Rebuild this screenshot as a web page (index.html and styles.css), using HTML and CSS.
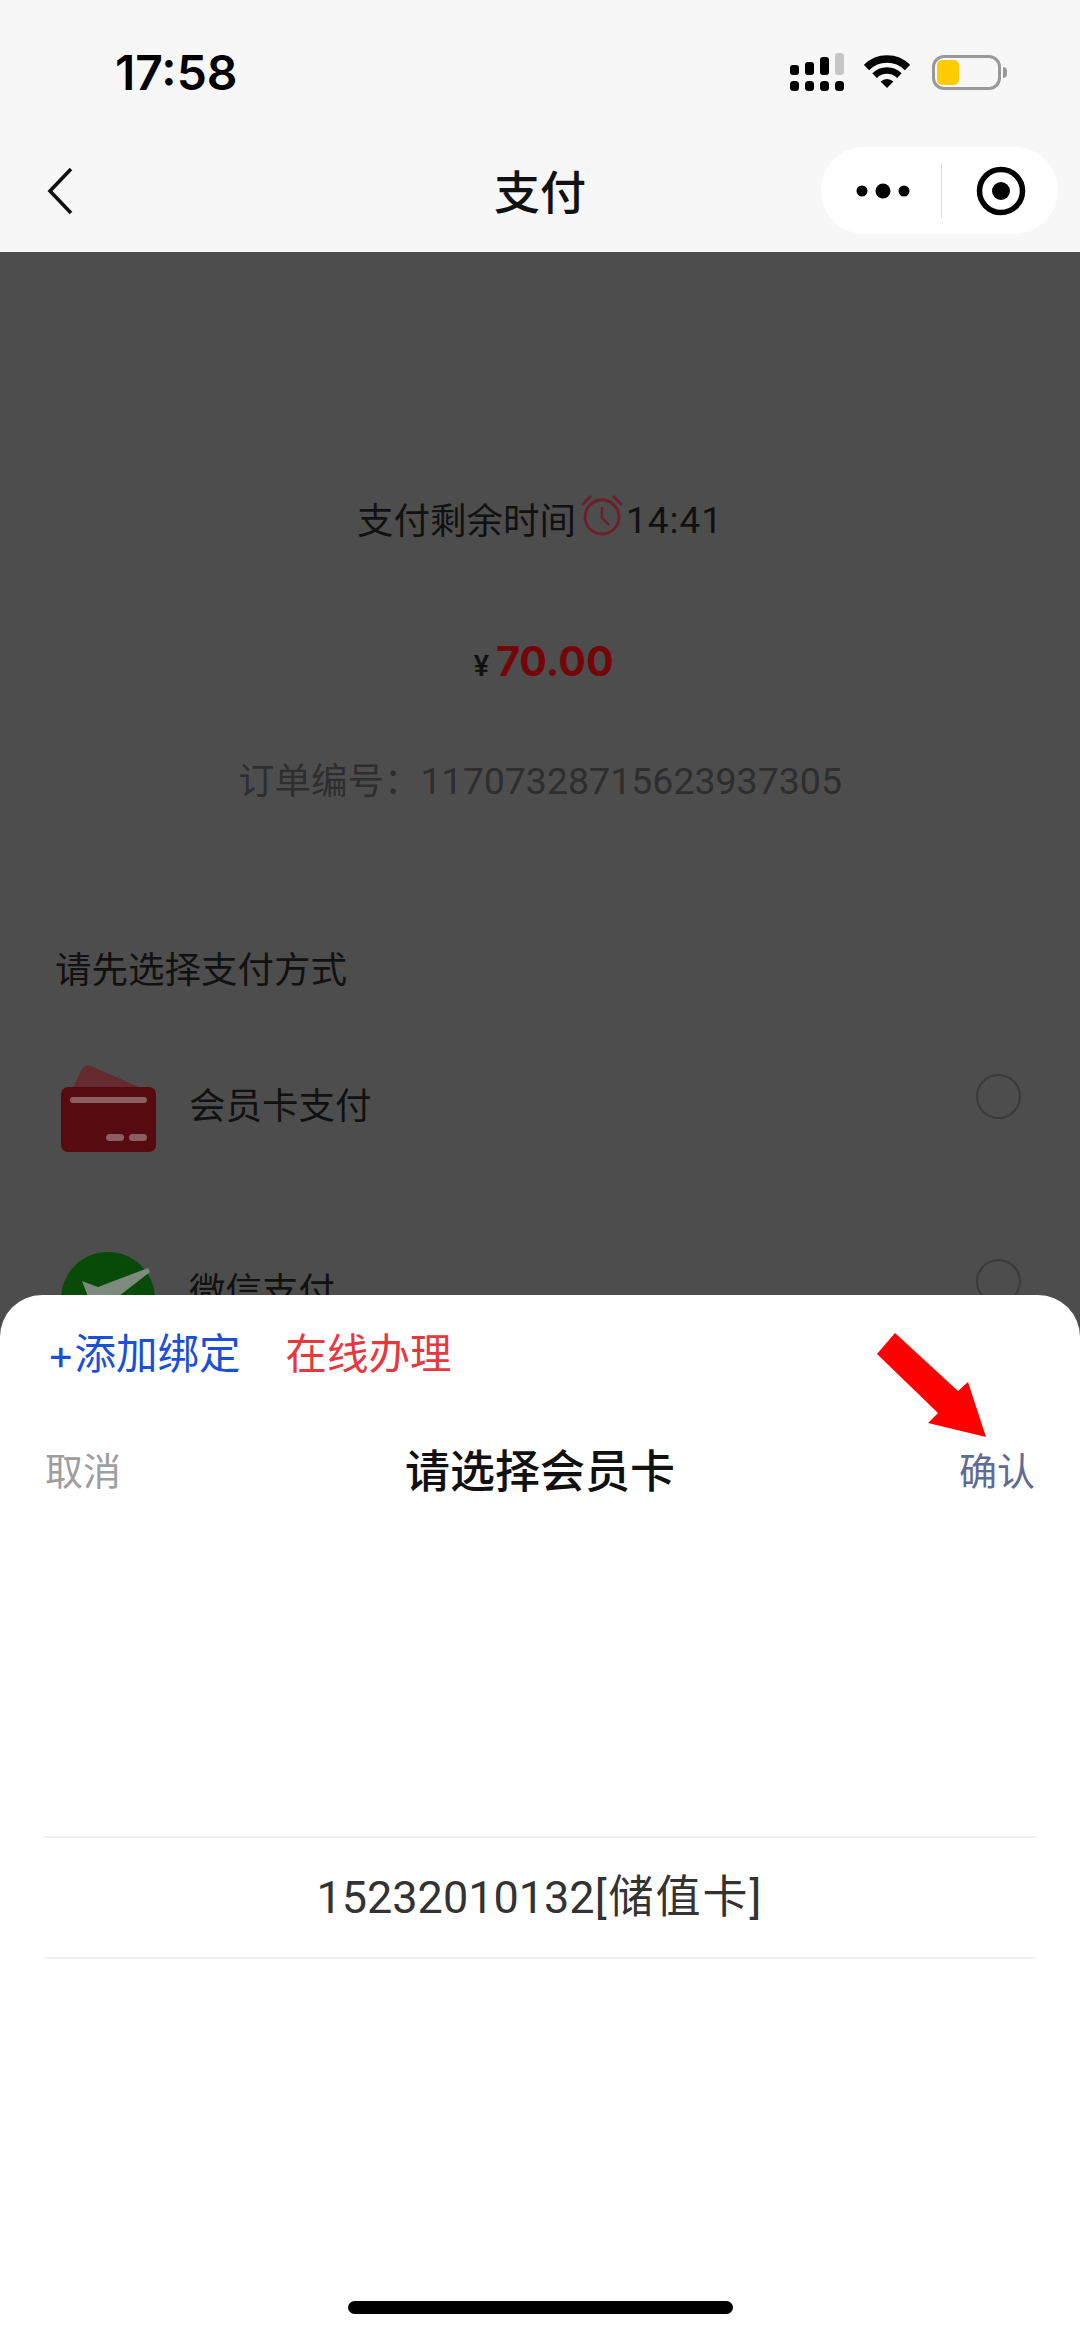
FILE: index.html
```html
<!DOCTYPE html>
<html lang="zh-CN">
<head>
    <meta charset="UTF-8">
    <meta name="viewport" content="width=device-width, initial-scale=1.0">
    <title>支付</title>
    <link rel="stylesheet" href="styles.css">
</head>
<body>
    <div class="phone">
        <!-- Status bar -->
        <div class="status-bar">
            <span class="time">17:58</span>
            <div class="status-icons">
                <svg class="signal" width="54" height="38" viewBox="0 0 54 38">
                    <rect x="0" y="12" width="9" height="10" rx="3" fill="#000"/>
                    <rect x="15" y="9" width="9" height="13" rx="3" fill="#000"/>
                    <rect x="30" y="4" width="9" height="18" rx="3" fill="#000"/>
                    <rect x="45" y="0" width="9" height="22" rx="3" fill="#c6c6c6"/>
                    <rect x="0" y="28" width="9" height="10" rx="3.5" fill="#000"/>
                    <rect x="15" y="28" width="9" height="10" rx="3.5" fill="#000"/>
                    <rect x="30" y="28" width="9" height="10" rx="3.5" fill="#000"/>
                    <rect x="45" y="28" width="9" height="10" rx="3.5" fill="#000"/>
                </svg>
                <svg class="wifi" width="46" height="34" viewBox="0 0 46 34">
                    <path d="M23 33 L16.6 26.6 A9 9 0 0 1 29.4 26.6 Z" fill="#000"/>
                    <path d="M10.6 20.6 A17.5 17.5 0 0 1 35.4 20.6" fill="none" stroke="#000" stroke-width="6.5"/>
                    <path d="M2.5 12.5 A29 29 0 0 1 43.5 12.5" fill="none" stroke="#000" stroke-width="7.5"/>
                </svg>
                <div class="battery">
                    <div class="battery-fill"></div>
                </div>
                <div class="battery-nub"></div>
            </div>
        </div>

        <!-- Nav bar -->
        <div class="nav-bar">
            <svg class="back" width="26" height="48" viewBox="0 0 26 48">
                <path d="M24 2 L3 24 L24 46" fill="none" stroke="#111" stroke-width="3.6"/>
            </svg>
            <h1 class="nav-title">支付</h1>
            <div class="capsule">
                <svg class="capsule-dots" width="54" height="16" viewBox="0 0 54 16">
                    <circle cx="6" cy="8" r="5.5" fill="#000"/>
                    <circle cx="27" cy="8" r="7.5" fill="#000"/>
                    <circle cx="48" cy="8" r="5.5" fill="#000"/>
                </svg>
                <div class="capsule-line"></div>
                <svg class="capsule-target" width="50" height="50" viewBox="0 0 50 50">
                    <circle cx="25" cy="25" r="21.5" fill="none" stroke="#000" stroke-width="5.5"/>
                    <circle cx="25" cy="25" r="9" fill="#000"/>
                </svg>
            </div>
        </div>

        <!-- Dimmed payment page -->
        <main class="pay-page">
            <div class="timer">
                <span>支付剩余时间</span>
                <svg class="alarm" width="44" height="42" viewBox="0 0 44 42">
                    <circle cx="22" cy="23" r="17" fill="none" stroke="#6e1e2a" stroke-width="2.8"/>
                    <path d="M22 13 V24 L29 31" fill="none" stroke="#6e1e2a" stroke-width="2.4"/>
                    <path d="M2 11 L11 2 M42 11 L33 2" fill="none" stroke="#6e1e2a" stroke-width="2.8"/>
                </svg>
                <span class="timer-count">14:41</span>
            </div>
            <div class="amount">
                <span class="yen">¥</span>
                <span class="price">70.00</span>
            </div>
            <p class="order-no">订单编号：<span class="order-digits">11707328715623937305</span></p>
            <p class="pay-heading">请先选择支付方式</p>

            <div class="pay-row">
                <svg class="pay-icon" width="96" height="87" viewBox="0 0 96 87">
                    <path d="M12 23 L21 4 Q24 -1 30 1 L80 23 Z" fill="#642a2e"/>
                    <rect x="0" y="22" width="95" height="65" rx="7" fill="#550b10"/>
                    <rect x="9" y="32" width="77" height="6" rx="3" fill="#8b5f60"/>
                    <rect x="45" y="69" width="18" height="7" rx="3.5" fill="#8b5f60"/>
                    <rect x="68" y="69" width="18" height="7" rx="3.5" fill="#8b5f60"/>
                </svg>
                <span class="pay-name">会员卡支付</span>
                <span class="radio"></span>
            </div>
            <div class="pay-row">
                <svg class="pay-icon" width="96" height="96" viewBox="0 0 96 96">
                    <circle cx="47" cy="49" r="47" fill="#084a08"/>
                    <path d="M21 31 L37 37 L87 18 L89 22 L40 60 Q34 62 31 57 Z" fill="#7f8a7f"/>
                </svg>
                <span class="pay-name">微信支付</span>
                <span class="radio"></span>
            </div>
        </main>

        <!-- Card picker sheet -->
        <section class="sheet">
            <div class="sheet-links">
                <span class="link-add">+添加绑定</span>
                <span class="link-apply">在线办理</span>
            </div>
            <div class="sheet-head">
                <span class="btn-cancel">取消</span>
                <span class="sheet-title">请选择会员卡</span>
                <span class="btn-confirm">确认</span>
            </div>
            <div class="picker">
                <div class="picker-item">15232010132<span class="picker-type">[储值卡]</span></div>
            </div>
            <div class="home-bar"></div>
        </section>

        <!-- Red marker pointing at confirm -->
        <svg class="marker" width="120" height="116" viewBox="0 0 120 116">
            <polygon points="20,3 2,24 63,83 53,93 111,107 93,52 83,61" fill="#ff0000"/>
        </svg>
    </div>
</body>
</html>
```

FILE: styles.css
```css
/* Basic Reset */
* {
    margin: 0;
    padding: 0;
    box-sizing: border-box;
}

body {
    font-family: Inter, 'Noto Sans CJK SC', sans-serif;
    background-color: #4d4d4d;
}

.phone {
    position: relative;
    width: 1080px;
    height: 2337px;
    overflow: hidden;
}

/* Status bar */
.status-bar {
    display: flex;
    justify-content: space-between;
    align-items: center;
    height: 132px;
    padding: 12px 73px 0 115px;
    background-color: #f7f7f7;
}

.time {
    font-size: 48px;
    font-weight: 600;
    color: #000;
}

.status-icons {
    display: flex;
    align-items: center;
}

.wifi {
    margin-left: 20px;
}

.battery {
    width: 69px;
    height: 35px;
    margin-left: 22px;
    padding: 2px;
    border: 3px solid #999;
    border-radius: 12px;
}

.battery-fill {
    width: 22px;
    height: 100%;
    background-color: #ffcc00;
    border-radius: 5px;
}

.battery-nub {
    width: 4px;
    height: 11px;
    margin-left: 2px;
    background-color: #999;
    border-radius: 0 4px 4px 0;
}

/* Nav bar */
.nav-bar {
    position: relative;
    display: flex;
    justify-content: space-between;
    align-items: center;
    height: 120px;
    padding: 0 22px 3px 47px;
    background-color: #f7f7f7;
}

.nav-title {
    position: absolute;
    left: 0;
    right: 0;
    margin-top: -3px;
    text-align: center;
    font-size: 46px;
    font-weight: 500;
    color: #111;
}

.capsule {
    display: flex;
    align-items: center;
    width: 237px;
    height: 87px;
    padding-left: 35px;
    background-color: #fff;
    border-radius: 44px;
}

.capsule-line {
    width: 1px;
    height: 54px;
    margin: 0 34px 0 31px;
    background-color: #dcdcdc;
}

/* Dimmed payment page */
.pay-page {
    padding-top: 236px;
    color: #111;
}

.timer {
    display: flex;
    justify-content: center;
    align-items: center;
    height: 60px;
    font-size: 36.5px;
}

.alarm {
    margin: -6px 0 0 4px;
}

.timer-count {
    margin: 4px 0 0 2px;
    font-family: Roboto, sans-serif;
    font-size: 37px;
    letter-spacing: 1px;
}

.amount {
    display: flex;
    justify-content: center;
    align-items: baseline;
    height: 60px;
    margin-top: 88px;
    padding-left: 7px;
}

.yen {
    margin-right: 7px;
    font-size: 28px;
    font-weight: 600;
}

.price {
    font-size: 41px;
    font-weight: 700;
    color: #740509;
}

.order-no {
    height: 50px;
    margin-top: 60px;
    text-align: center;
    font-size: 36.5px;
    line-height: 50px;
    color: #2e2e2e;
}

.order-digits {
    font-family: Roboto, sans-serif;
    font-size: 37.5px;
}

.pay-heading {
    height: 50px;
    margin-top: 139px;
    margin-bottom: 20px;
    padding-left: 55px;
    font-size: 36.5px;
    line-height: 50px;
}

.pay-row {
    display: flex;
    align-items: flex-start;
    height: 185px;
    padding-left: 61px;
}

.pay-icon {
    flex: none;
    width: 96px;
    margin-top: 50px;
}

.pay-name {
    flex: 1;
    margin: 65px 0 0 32px;
    font-size: 36.5px;
    line-height: 52px;
}

.radio {
    width: 45px;
    height: 45px;
    margin: 59px 59px 0 0;
    border: 2px solid #3a3a3a;
    border-radius: 50%;
}

/* Card picker sheet */
.sheet {
    position: absolute;
    left: 0;
    right: 0;
    bottom: 0;
    height: 1042px;
    background-color: #fff;
    border-radius: 42px 42px 0 0;
}

.sheet-links {
    display: flex;
    align-items: center;
    gap: 45px;
    height: 56px;
    margin-top: 28px;
    padding-left: 47px;
    font-size: 41.5px;
}

.link-add {
    color: #1a4fd8;
}

.link-apply {
    color: #e6393f;
}

.sheet-head {
    display: flex;
    justify-content: space-between;
    align-items: center;
    height: 60px;
    margin-top: 59px;
    padding: 0 45px;
}

.btn-cancel {
    font-size: 38px;
    color: #9e9e9e;
}

.sheet-title {
    font-size: 45px;
    font-weight: 500;
    color: #111;
}

.btn-confirm {
    font-size: 38px;
    color: #5f6b94;
}

.picker {
    margin: 338px 44px 0;
    border-top: 2px solid #f0f0f0;
    border-bottom: 2px solid #f0f0f0;
}

.picker-item {
    height: 119px;
    text-align: center;
    font-family: Roboto, 'Noto Sans CJK SC', sans-serif;
    font-size: 45px;
    line-height: 119px;
    color: #333;
}

.picker-type {
    letter-spacing: 2px;
}

.home-bar {
    position: absolute;
    left: 348px;
    bottom: 23px;
    width: 385px;
    height: 13px;
    background-color: #000;
    border-radius: 7px;
}

/* Red marker */
.marker {
    position: absolute;
    left: 875px;
    top: 1330px;
}
```
